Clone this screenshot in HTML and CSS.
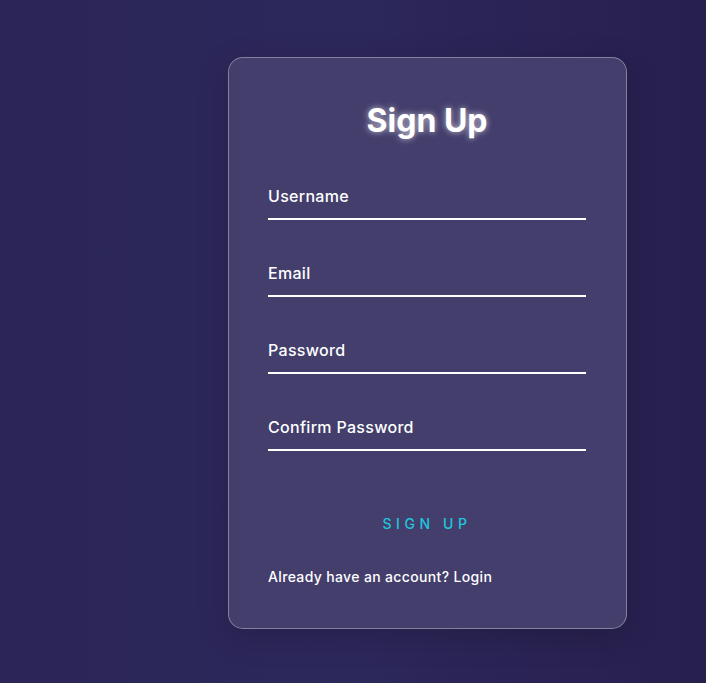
FILE: index.html
```html
<!DOCTYPE html>
<html lang="en">
<head>
  <meta charset="UTF-8">
  <title>Sign Up</title>
  <meta name="viewport" content="width=device-width, initial-scale=1">
  <link rel="stylesheet" href="styles.css">
</head>
<body>

<div class="page">
  <div class="card">
    <h2>Sign Up</h2>

    <form class="form" onsubmit="return false">
      <div class="field">
        <input type="text" placeholder="Username">
      </div>
      <div class="field">
        <input type="email" placeholder="Email">
      </div>
      <div class="field">
        <input type="password" placeholder="Password">
      </div>
      <div class="field">
        <input type="password" placeholder="Confirm Password">
      </div>

      <button type="submit" class="submit">Sign Up</button>
    </form>

    <p class="switch">Already have an account? <a href="#">Login</a></p>
  </div>
</div>

</body>
</html>
```

FILE: styles.css
```css
body {
  font-family: 'Inter', 'Noto Sans', sans-serif;
  background: linear-gradient(90deg, #2b2657 0%, #2d285b 50%, #271f4e 100%);
  color: #fff;
  margin: 0;
  padding: 0;
  min-height: 100vh;
}
.page {
  padding: 57px 0 0 228px;
}
.card {
  width: 318px;
  padding: 40px 40px 41px 39px;
  background-color: #433e6c;
  border: 1px solid rgba(255,255,255,0.35);
  border-radius: 15px;
  box-shadow: 0 8px 32px rgba(0,0,0,0.18);
}
h2 {
  margin: 0;
  font-size: 32px;
  line-height: 45px;
  font-weight: 700;
  text-align: center;
  text-shadow: 0 0 6px rgba(255,255,255,0.7);
}
.form {
  display: flex;
  flex-direction: column;
  gap: 35px;
  margin-top: 35px;
}
.field input {
  display: block;
  width: 100%;
  box-sizing: border-box;
  padding: 8px 0 12px;
  font-family: inherit;
  font-size: 16px;
  line-height: 20px;
  font-weight: 500;
  letter-spacing: 0.3px;
  color: #fff;
  background: transparent;
  border: none;
  border-bottom: 2px solid #fff;
  outline: none;
}
.field input::placeholder {
  color: #fff;
  opacity: 1;
}
.submit {
  margin-top: 18px;
  align-self: center;
  padding: 10px 20px;
  font-family: inherit;
  font-size: 14px;
  line-height: 20px;
  font-weight: 500;
  letter-spacing: 4.6px;
  text-transform: uppercase;
  color: #1ec6dc;
  background: transparent;
  border: none;
  cursor: pointer;
}
.switch {
  margin: 23px 0 0;
  font-size: 14px;
  line-height: 20px;
  font-weight: 500;
  letter-spacing: 0.35px;
}
.switch a {
  color: #fff;
  text-decoration: none;
}
```
